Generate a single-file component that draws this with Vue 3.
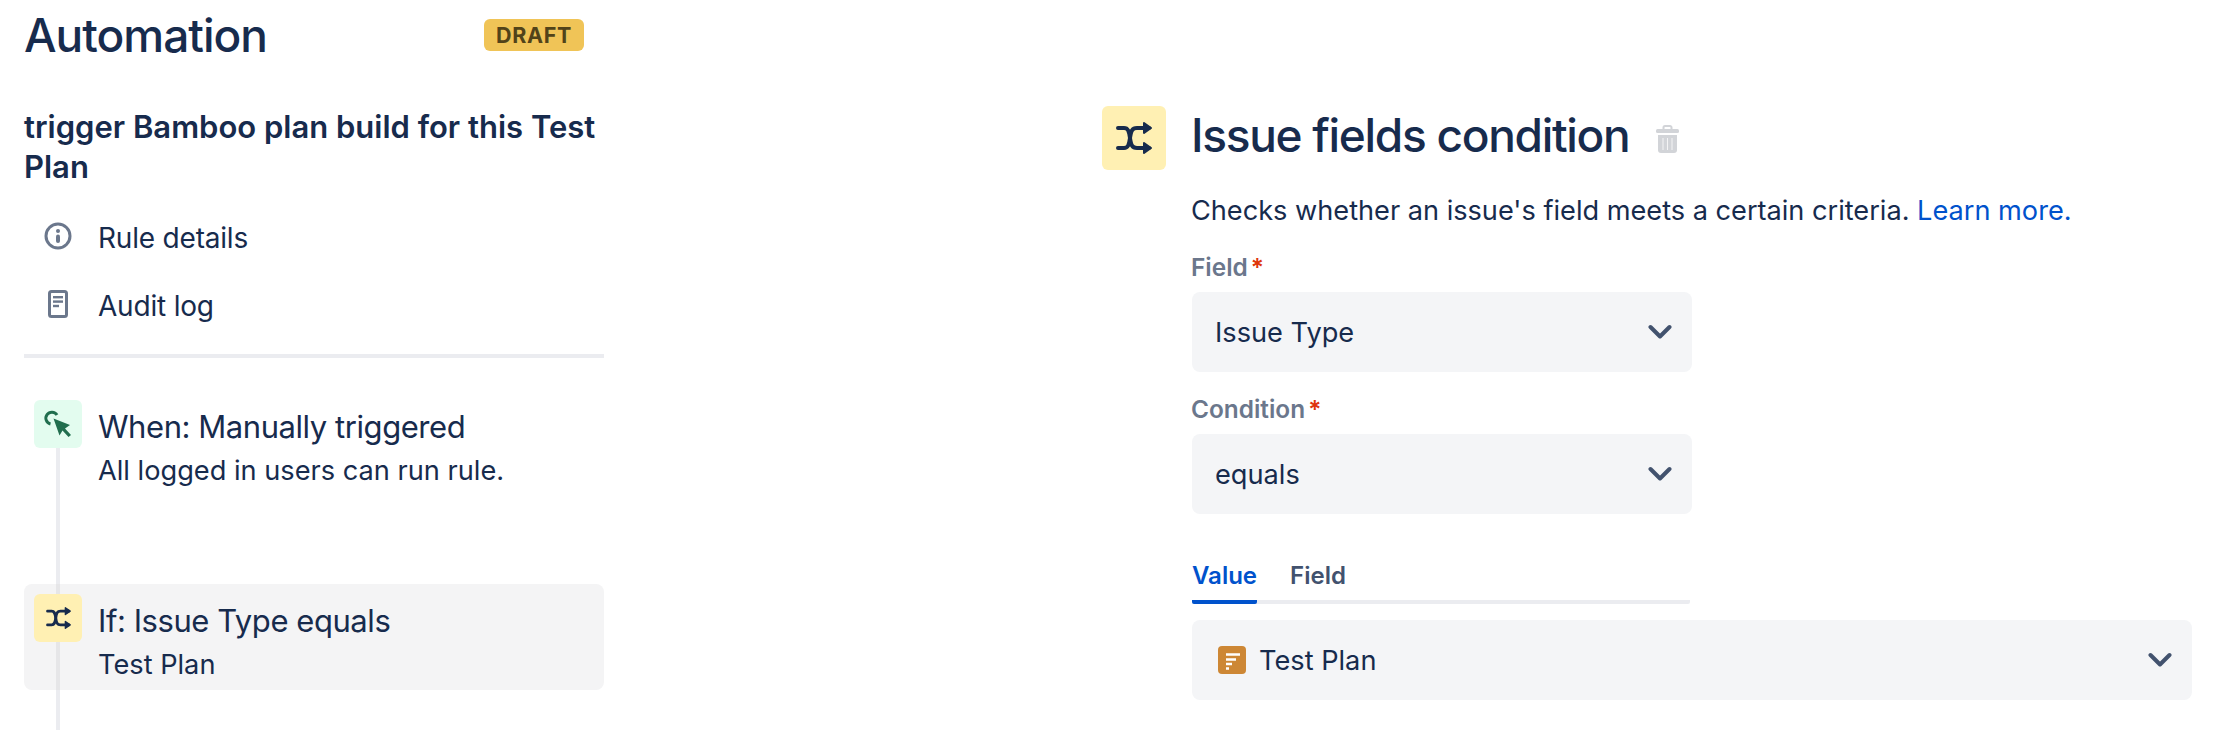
<template>
  <div class="page">
    <!-- left column: rule overview -->
    <aside class="sidebar">
      <div class="sidebar-head">
        <h1 class="sidebar-title">Automation</h1>
        <span class="badge">DRAFT</span>
      </div>
      <h2 class="rule-name">trigger Bamboo plan build for this Test Plan</h2>

      <ul class="rule-nav">
        <li class="rule-nav-item">
          <span class="nav-icon">
            <svg width="28" height="28" viewBox="0 0 28 28">
              <circle cx="14" cy="14" r="12" fill="none" stroke="#6b778c" stroke-width="3" />
              <circle cx="14" cy="9" r="2" fill="#6b778c" />
              <rect x="12" y="12.5" width="4" height="8.5" rx="2" fill="#6b778c" />
            </svg>
          </span>
          Rule details
        </li>
        <li class="rule-nav-item">
          <span class="nav-icon">
            <svg width="20" height="28" viewBox="0 0 20 28">
              <rect x="1.5" y="1.5" width="17" height="25" rx="2" fill="none" stroke="#6b778c" stroke-width="3" />
              <rect x="5" y="6" width="10" height="2.4" fill="#6b778c" />
              <rect x="5" y="10.4" width="10" height="2.4" fill="#6b778c" />
              <rect x="5" y="14.8" width="6" height="2.4" fill="#6b778c" />
            </svg>
          </span>
          Audit log
        </li>
      </ul>

      <div class="divider"></div>

      <div class="step">
        <div class="rail">
          <span class="step-icon trigger">
            <svg width="48" height="48" viewBox="0 0 48 48">
              <path d="M23 15 A6 6 0 1 0 16.5 24" fill="none" stroke="#216e4e" stroke-width="3" />
              <path d="M19.5 18.5 L36 25 L31 28.5 L37 35 L34.5 37 L28.5 30.5 L25.5 35.5 Z" fill="#216e4e" />
            </svg>
          </span>
          <span class="rail-line"></span>
        </div>
        <div class="step-text">
          <div class="step-title">When: Manually triggered</div>
          <div class="step-sub">All logged in users can run rule.</div>
        </div>
      </div>

      <div class="step selected">
        <div class="rail">
          <span class="rail-line top"></span>
          <span class="step-icon condition">
            <svg width="25" height="22" viewBox="0 0 36 32">
              <path d="M2 6 H8 C12 6 13 9 14 16 C15 23 16 26 21 26 H33" fill="none" stroke="#172b4d" stroke-width="4" stroke-linecap="round" />
              <path d="M2 26 H8 C12 26 13 23 14 16 C15 9 16 6 21 6 H33" fill="none" stroke="#172b4d" stroke-width="4" stroke-linecap="round" />
              <path d="M28 1 L35 6 L28 11 Z M28 21 L35 26 L28 31 Z" fill="#172b4d" stroke="#172b4d" stroke-width="2" stroke-linejoin="round" />
            </svg>
          </span>
          <span class="rail-line"></span>
        </div>
        <div class="step-text">
          <div class="step-title">If: Issue Type equals</div>
          <div class="step-sub">Test Plan</div>
        </div>
      </div>

      <span class="rail-line tail"></span>
    </aside>

    <!-- right column: condition form -->
    <main class="panel">
      <div class="panel-head">
        <span class="panel-icon">
          <svg width="36" height="32" viewBox="0 0 36 32">
            <path d="M2 6 H8 C12 6 13 9 14 16 C15 23 16 26 21 26 H33" fill="none" stroke="#172b4d" stroke-width="4" stroke-linecap="round" />
            <path d="M2 26 H8 C12 26 13 23 14 16 C15 9 16 6 21 6 H33" fill="none" stroke="#172b4d" stroke-width="4" stroke-linecap="round" />
            <path d="M28 1 L35 6 L28 11 Z M28 21 L35 26 L28 31 Z" fill="#172b4d" stroke="#172b4d" stroke-width="2" stroke-linejoin="round" />
          </svg>
        </span>
        <h2 class="panel-title">Issue fields condition</h2>
        <svg class="trash" width="23" height="28" viewBox="0 0 23 28">
          <path d="M7.5 4 V2.5 A1.5 1.5 0 0 1 9 1 H14 A1.5 1.5 0 0 1 15.5 2.5 V4" fill="none" stroke="#d2d4d8" stroke-width="2" />
          <rect x="0" y="4" width="23" height="4" rx="1.5" fill="#d2d4d8" />
          <path d="M2 10 H21 V25 A3 3 0 0 1 18 28 H5 A3 3 0 0 1 2 25 Z" fill="#d2d4d8" />
          <path d="M7 13 V25 M11.5 13 V25 M16 13 V25" stroke="#f4f4f5" stroke-width="1" />
        </svg>
      </div>

      <div class="panel-body">
        <p class="desc">Checks whether an issue's field meets a certain criteria. <a class="link">Learn more.</a></p>

        <label class="field-label">Field<span class="req">*</span></label>
        <div class="select">
          <span>Issue Type</span>
          <svg class="chevron" width="24" height="16" viewBox="0 0 24 16">
            <path d="M2.5 3 L12 12.5 L21.5 3" fill="none" stroke="#42526e" stroke-width="4" stroke-linecap="round" stroke-linejoin="round" />
          </svg>
        </div>

        <label class="field-label">Condition<span class="req">*</span></label>
        <div class="select">
          <span>equals</span>
          <svg class="chevron" width="24" height="16" viewBox="0 0 24 16">
            <path d="M2.5 3 L12 12.5 L21.5 3" fill="none" stroke="#42526e" stroke-width="4" stroke-linecap="round" stroke-linejoin="round" />
          </svg>
        </div>

        <div class="tabs">
          <span class="tab active">Value</span>
          <span class="tab">Field</span>
        </div>
        <div class="select wide">
          <span class="option">
            <svg width="28" height="28" viewBox="0 0 28 28">
              <rect width="28" height="28" rx="4" fill="#cd8735" />
              <path d="M8 8.5 H22 M8 13.5 H18 M8 18 H14 M8 22.5 H11" stroke="#fff" stroke-width="2.4" />
            </svg>
            Test Plan
          </span>
          <svg class="chevron" width="24" height="16" viewBox="0 0 24 16">
            <path d="M2.5 3 L12 12.5 L21.5 3" fill="none" stroke="#42526e" stroke-width="4" stroke-linecap="round" stroke-linejoin="round" />
          </svg>
        </div>
      </div>
    </main>
  </div>
</template>

<script setup>
</script>

<style>
html, body {
  margin: 0;
  background: #fff;
}
</style>

<style scoped>
.page {
  display: flex;
  height: 730px;
  overflow: hidden;
  box-sizing: border-box;
  font-family: Inter, 'Liberation Sans', sans-serif;
  color: #172b4d;
}

.sidebar {
  display: flex;
  flex-direction: column;
  width: 580px;
  margin-left: 24px;
  padding-top: 8px;
}

.sidebar-head {
  display: flex;
  align-items: center;
  justify-content: space-between;
  height: 54px;
  padding-right: 20px;
  margin-bottom: 45px;
}

.sidebar-title {
  margin: 0;
  font-size: 46px;
  line-height: 54px;
  font-weight: 500;
  letter-spacing: -1px;
}

.badge {
  width: 100px;
  height: 32px;
  line-height: 32px;
  text-align: center;
  border-radius: 6px;
  background: #f0c457;
  color: #524319;
  font-size: 21.5px;
  font-weight: 700;
  letter-spacing: 0.7px;
}

.rule-name {
  margin: 0;
  font-size: 31px;
  line-height: 40px;
  font-weight: 600;
}

.rule-nav {
  list-style: none;
  margin: 17px 0 0;
  padding: 0;
}

.rule-nav-item {
  display: flex;
  align-items: center;
  height: 68px;
  font-size: 28px;
  letter-spacing: -0.2px;
}

.nav-icon {
  display: flex;
  justify-content: center;
  width: 28px;
  margin: -4px 26px 0 20px;
}

.divider {
  height: 4px;
  margin-top: 14px;
  background: #ebecf0;
}

.step {
  display: flex;
  height: 184px;
  padding-left: 10px;
  margin-top: 42px;
  gap: 16px;
}

.step.selected {
  height: 106px;
  margin-top: 0;
  border-radius: 8px;
  background: #f4f4f5;
}

.rail {
  display: flex;
  flex-direction: column;
  align-items: center;
  width: 48px;
}

.rail-line {
  display: block;
  flex: 1;
  width: 4px;
  background: #ebecf0;
}

.rail-line.top {
  flex: none;
  height: 10px;
}

.selected .rail-line {
  background: #e6e6e8;
}

.rail-line.tail {
  flex: 1;
  margin-left: 32px;
}

.step-icon {
  display: flex;
  align-items: center;
  justify-content: center;
  flex: none;
  width: 48px;
  height: 48px;
  border-radius: 6px;
}

.step-icon.trigger {
  background: #e3fcef;
}

.step-icon.condition {
  background: #fff0b3;
}

.step-text {
  padding-top: 7px;
}

.selected .step-text {
  padding-top: 17px;
}

.step-title {
  font-size: 31px;
  line-height: 40px;
  letter-spacing: -0.44px;
}

.step-sub {
  margin-top: 6px;
  font-size: 27.2px;
  line-height: 36px;
}

.panel {
  margin-left: 498px;
  padding-top: 106px;
}

.panel-head {
  display: flex;
  align-items: center;
  height: 64px;
}

.panel-icon {
  display: flex;
  align-items: center;
  justify-content: center;
  width: 64px;
  height: 64px;
  border-radius: 6px;
  background: #fff0b3;
}

.panel-title {
  margin: -6px 0 0 25px;
  font-size: 46px;
  line-height: 54px;
  font-weight: 500;
  letter-spacing: -1.3px;
}

.trash {
  margin: 2px 0 0 27px;
}

.panel-body {
  display: flex;
  flex-direction: column;
  margin-left: 90px;
}

.desc {
  margin: 21px 0 0 -1px;
  font-size: 27.15px;
  line-height: 40px;
  white-space: nowrap;
}

.link {
  color: #0052cc;
}

.field-label {
  margin: 20px 0 0 -1px;
  font-size: 24.4px;
  line-height: 32px;
  font-weight: 600;
  color: #6b778c;
}

.select + .field-label {
  margin-top: 21px;
}

.req {
  margin-left: 3px;
  color: #de350b;
}

.select {
  display: flex;
  align-items: center;
  justify-content: space-between;
  box-sizing: border-box;
  width: 500px;
  height: 80px;
  margin-top: 9px;
  padding: 0 20px 0 23px;
  border-radius: 8px;
  background: #f4f5f7;
  font-size: 27.2px;
}

.select.wide {
  width: 1000px;
  margin-top: 16px;
  padding-left: 26px;
}

.option {
  display: flex;
  align-items: center;
  gap: 13px;
}

.tabs {
  display: flex;
  gap: 33px;
  width: 498px;
  margin-top: 46px;
  border-bottom: 4px solid #ebecf0;
  border-radius: 2px;
}

.tab {
  margin-bottom: -4px;
  padding-bottom: 8px;
  border-bottom: 4px solid transparent;
  font-size: 24px;
  line-height: 32px;
  font-weight: 600;
  color: #42526e;
}

.tab.active {
  color: #0052cc;
  border-bottom-color: #0052cc;
  border-radius: 2px;
}
</style>
